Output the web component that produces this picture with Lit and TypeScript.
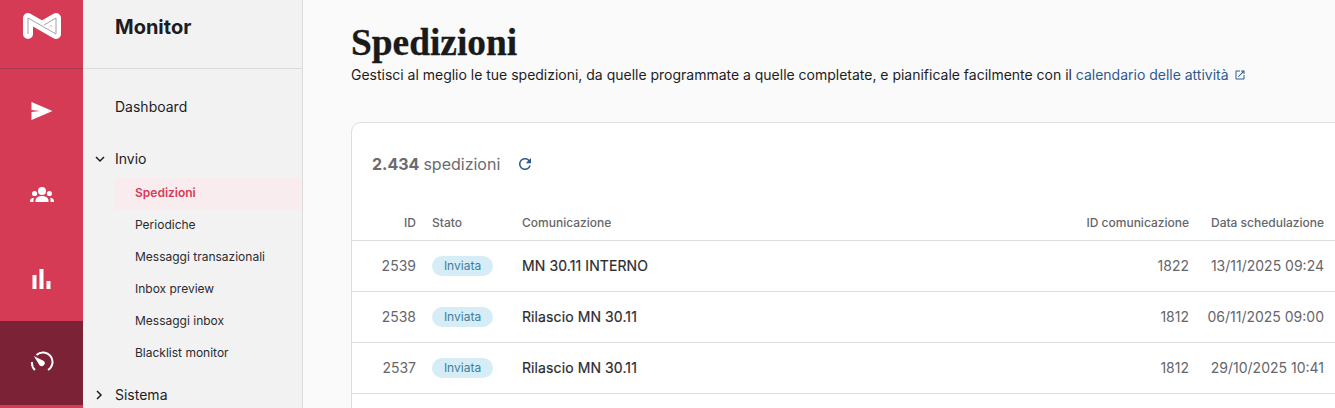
import { LitElement, html, css, svg } from "lit";
import { customElement } from "lit/decorators.js";

const rows = [
  ["2539", "MN 30.11 INTERNO", "1822", "13/11/2025 09:24"],
  ["2538", "Rilascio MN 30.11", "1812", "06/11/2025 09:00"],
  ["2537", "Rilascio MN 30.11", "1812", "29/10/2025 10:41"],
];

const logo = svg`<svg class="logo" width="38" height="26" viewBox="0 0 38 26">
  <path d="M5 21 L5 5 L33 21 L33 5 L19 13" fill="none" stroke="#fff" stroke-width="10" stroke-linecap="round" stroke-linejoin="round"/>
  <path d="M5 21 L5 5 L33 21 L33 5 L21 12" fill="none" stroke="#8b8b8f" stroke-width=".8"/>
  <circle cx="28" cy="13" r=".7" fill="#e06a80"/>
</svg>`;
const send = svg`<svg width="24" height="24" viewBox="0 0 24 24"><path d="M1.500 3 L22.500 12 L1.500 21 L1.500 13 L10 12 L1.500 11Z" fill="#fff"/></svg>`;
const people = svg`<svg width="24" height="24" viewBox="0 0 24 24" fill="#fff"><circle cx="12" cy="8" r="4"/><circle cx="4.600" cy="10.500" r="2.600"/><circle cx="19.400" cy="10.500" r="2.600"/><path d="M5.500 19v-1.500C5.500 15 8.500 13 12 13s6.500 2 6.500 4.500V19Z"/><path d="M0 19v-1.200C0 16 1.800 15 3.800 14.800 3.600 15.500 3.500 16.500 3.500 19Z"/><path d="M24 19v-1.200C24 16 22.200 15 20.200 14.800 20.400 15.500 20.500 16.500 20.500 19Z"/></svg>`;
const bars = svg`<svg width="24" height="24" viewBox="0 0 24 24" fill="#fff"><rect x="2.500" y="8" width="4" height="14"/><rect x="9.500" y="2" width="4" height="20"/><rect x="16.500" y="14" width="4" height="8"/></svg>`;
const gauge = svg`<svg width="24" height="24" viewBox="0 0 24 24"><path d="M5 19 A9.500 9.500 0 0 1 2 11 M6.500 4 A9.500 9.500 0 1 1 18 19" fill="none" stroke="#fff" stroke-width="2"/><path d="M3.800 5 L13.800 10 A3 3 0 0 1 9.500 14.300Z" fill="#fff"/></svg>`;
const down = svg`<svg width="10" height="7" viewBox="0 0 10 7"><path d="M1 1 L5 5 L9 1" fill="none" stroke="#1d1d1f" stroke-width="1.500"/></svg>`;
const right = svg`<svg width="7" height="10" viewBox="0 0 7 10"><path d="M1 1 L5 5 L1 9" fill="none" stroke="#1d1d1f" stroke-width="1.500"/></svg>`;
const ext = svg`<svg class="ext" width="12" height="12" viewBox="0 0 24 24" fill="#2f5a8f"><path d="M19 19H5V5h7V3H5c-1.110 0-2 .9-2 2v14c0 1.100.89 2 2 2h14c1.100 0 2-.9 2-2v-7h-2v7zM14 3v2h3.590l-9.830 9.830 1.410 1.410L19 6.410V10h2V3h-7z"/></svg>`;
const refresh = svg`<svg width="18" height="18" viewBox="0 0 24 24" fill="#2f5a8f"><path d="M17.650 6.350C16.200 4.900 14.210 4 12 4c-4.420 0-7.990 3.580-7.990 8s3.570 8 7.990 8c3.730 0 6.840-2.550 7.730-6h-2.080c-.82 2.330-3.040 4-5.650 4-3.310 0-6-2.690-6-6s2.690-6 6-6c1.660 0 3.140.69 4.220 1.780L13 11h7V4l-2.350 2.350z"/></svg>`;

@customElement("app-root")
export class AppRoot extends LitElement {
  static styles = css`
    :host { display: flex; height: 408px; overflow: hidden; font-family: Inter, "Liberation Sans", sans-serif; color: #1d1d1f; background: #fafafa; }
    .rail { width: 83px; flex: none; background: #d63b56; display: flex; flex-direction: column; }
    .rail-top { border-bottom: 1px solid #a8384f; display: flex; justify-content: center; padding-top: 13px; height: 55px; }
    .logo { display: block; }
    .rail-item { height: 84px; display: flex; align-items: center; justify-content: center; }
    .rail-item.active { background: #7b2236; }
    .side { width: 218px; flex: none; background: #f2f2f3; border-right: 1px solid #dcdcde; border-left: 1px solid #f2f2f3; }
    .side-head { height: 68px; border-bottom: 1px solid #dcdcde; padding-left: 31px; font-size: 20px; font-weight: 700; line-height: 24px; display: flex; }
    .side-head span { margin-top: 15px; }
    .nav { padding-top: 26px; font-size: 14px; line-height: 24px; }
    .top { display: flex; align-items: center; height: 24px; }
    .top .chev { width: 31px; display: flex; justify-content: center; }
    .group { margin-top: 28px; }
    .subs { margin-top: 7px; margin-left: 31px; font-size: 12px; line-height: 30px; }
    .sub { padding-left: 20px; height: 32px; color: #2b2b30; }
    .sub.on { background: #f9ecef; color: #d63b56; font-weight: 600; }
    .sistema { margin-top: 13px; }
    .main { flex: 1; min-width: 0; padding: 21px 0 0 48px; }
    h1 { margin: 0; font-family: "Liberation Serif", serif; font-size: 37.400px; line-height: 44px; font-weight: 700; color: #1a1a1a; -webkit-text-stroke: .3px #1a1a1a; }
    .desc { margin: 0; font-size: 14px; line-height: 20px; letter-spacing: -.01px; color: #1d1d1f; }
    .desc a { color: #2f5a8f; }
    .ext { margin-left: 5px; vertical-align: -1px; }
    .card { width: 990px; min-height: 400px; margin-top: 37px; background: #fff; border: 1px solid #dedee0; border-radius: 10px 0 0 0; box-sizing: border-box; }
    .count { height: 82px; padding-bottom: 2px; display: flex; align-items: center; padding-left: 20px; font-size: 16px; color: #6b6b70; }
    .count b { font-weight: 700; margin-right: 4px; }
    .count svg { margin-left: 16px; }
    .row { display: grid; grid-template-columns: 80px 90px 1fr 120px 135px; align-items: center; height: 51px; border-bottom: 1px solid #dedee0; font-size: 14px; box-sizing: border-box; }
    .row.head { height: 34px; font-size: 12px; color: #66666b; font-weight: 500; }
    .row > span { padding-bottom: 1px; }
    .row.head > span { padding-bottom: 2px; }
    .row > .cell-badge { padding-bottom: 0; display: flex; }
    .r { text-align: right; padding-right: 16px; }
    .muted { color: #66666b; }
    .name { color: #2b2b30; letter-spacing: .1px; -webkit-text-stroke: .2px #2b2b30; }
    .badge { display: inline-block; width: 61px; height: 20px; border-radius: 10px; background: #d6ecf6; color: #3d7f9e; font-size: 12px; line-height: 20px; text-align: center; }
    .d { color: #66666b; }
  `;

  render() {
    const subs = ["Periodiche", "Messaggi transazionali", "Inbox preview", "Messaggi inbox", "Blacklist monitor"];
    return html`
      <div class="rail">
        <div class="rail-top">${logo}</div>
        <div class="rail-item">${send}</div>
        <div class="rail-item">${people}</div>
        <div class="rail-item">${bars}</div>
        <div class="rail-item active">${gauge}</div>
      </div>
      <div class="side">
        <div class="side-head"><span>Monitor</span></div>
        <div class="nav">
          <div class="top"><span class="chev"></span>Dashboard</div>
          <div class="group">
            <div class="top"><span class="chev">${down}</span>Invio</div>
            <div class="subs">
              <div class="sub on">Spedizioni</div>
              ${subs.map((s) => html`<div class="sub">${s}</div>`)}
            </div>
          </div>
          <div class="top sistema"><span class="chev">${right}</span>Sistema</div>
        </div>
      </div>
      <div class="main">
        <h1>Spedizioni</h1>
        <p class="desc">Gestisci al meglio le tue spedizioni, da quelle programmate a quelle completate, e pianificale facilmente con il <a>calendario delle attività</a>${ext}</p>
        <div class="card">
          <div class="count"><b>2.434</b> spedizioni ${refresh}</div>
          <div class="row head"><span class="r">ID</span><span>Stato</span><span>Comunicazione</span><span class="r">ID comunicazione</span><span class="r">Data schedulazione</span></div>
          ${rows.map((r) => html`<div class="row"><span class="r muted">${r[0]}</span><span class="cell-badge"><span class="badge">Inviata</span></span><span class="name">${r[1]}</span><span class="r d">${r[2]}</span><span class="r d">${r[3]}</span></div>`)}
        </div>
      </div>
    `;
  }
}
